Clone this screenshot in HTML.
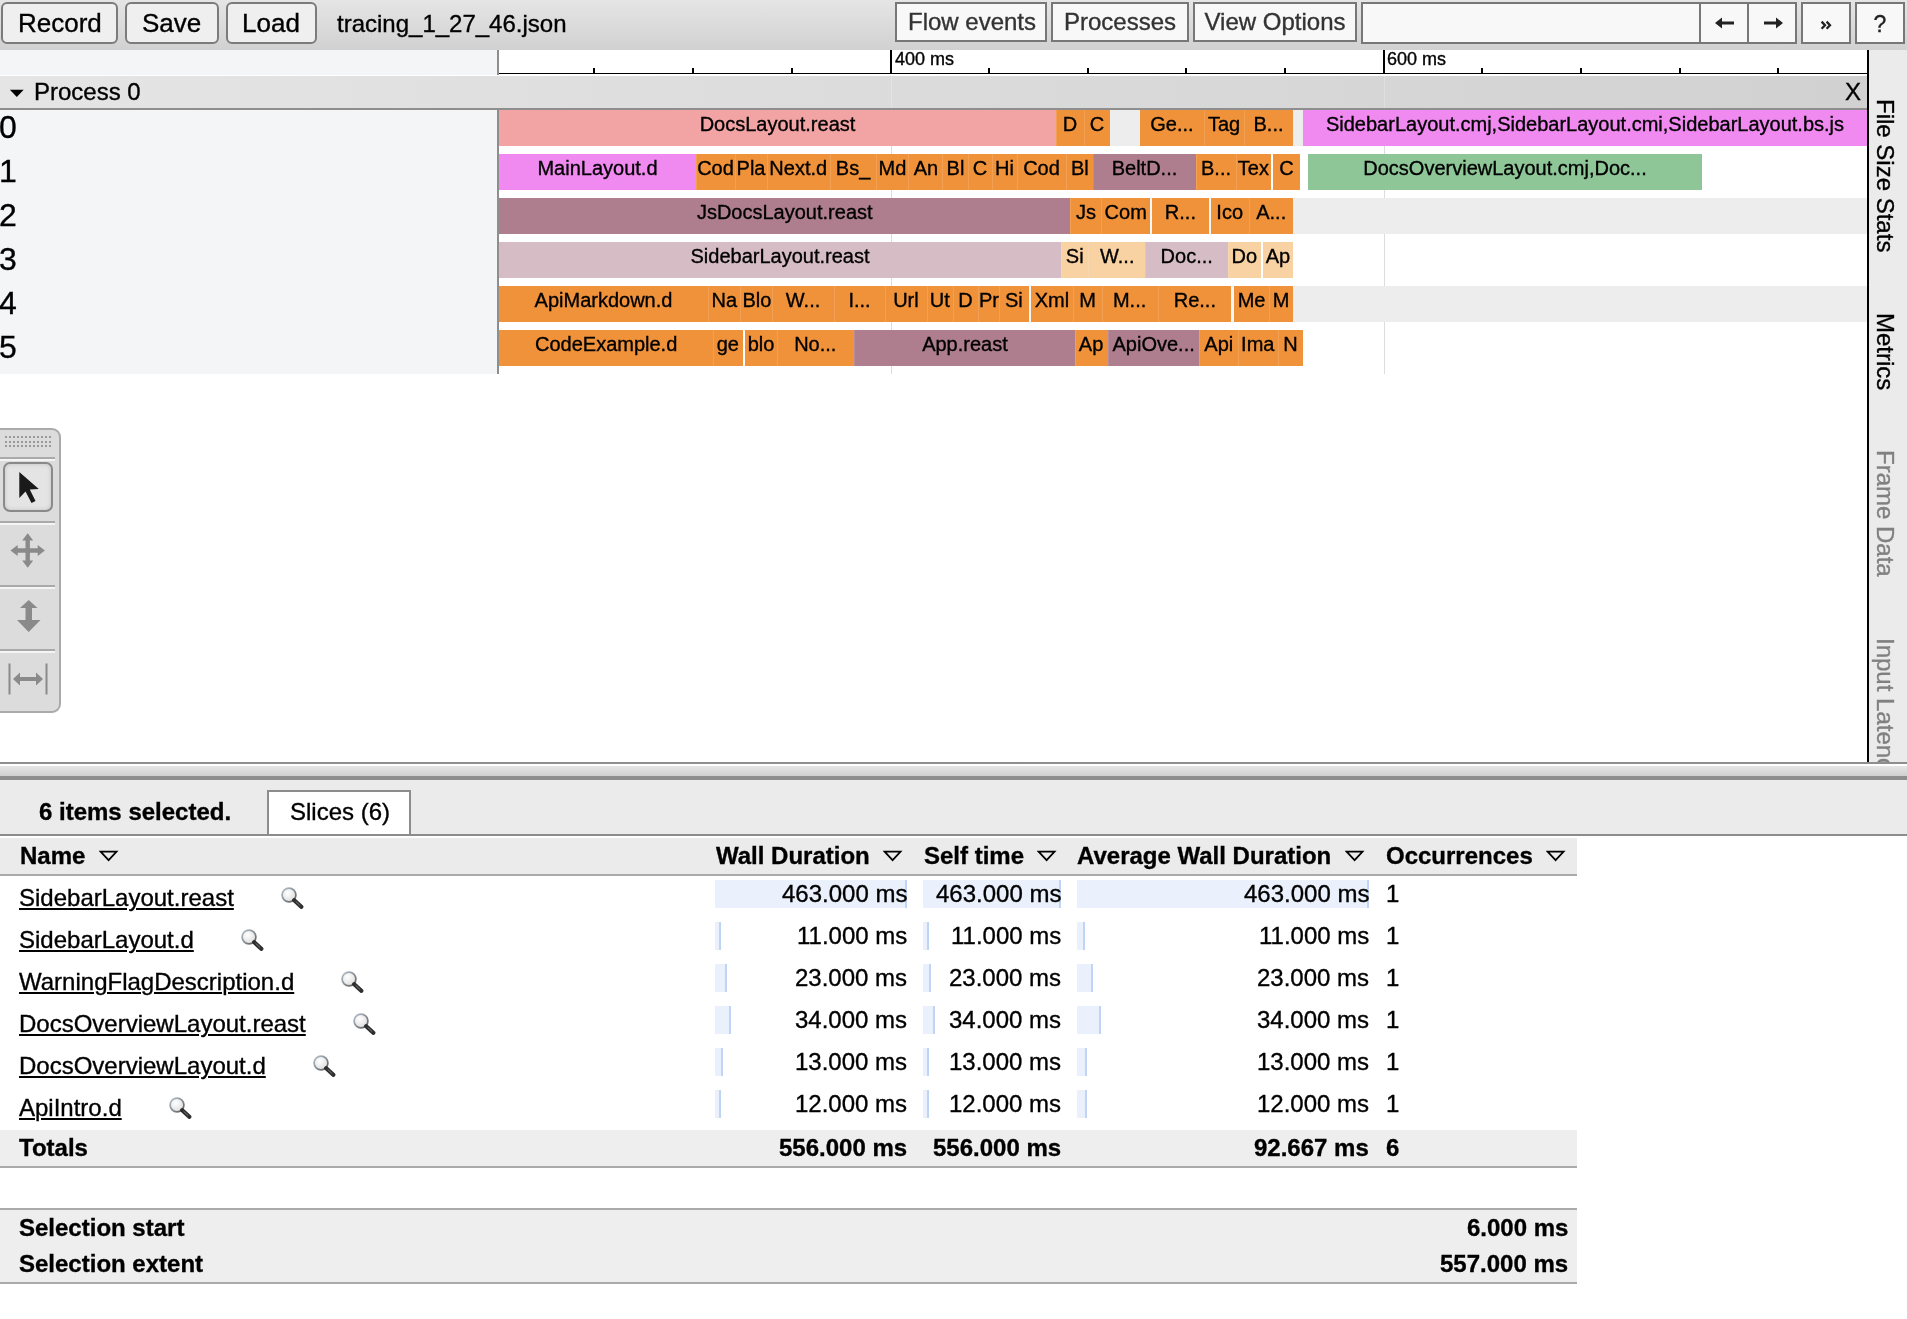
<!DOCTYPE html>
<html><head><meta charset="utf-8"><title>trace</title>
<style>
html,body{margin:0;padding:0;}
body{width:1907px;height:1319px;overflow:hidden;position:relative;background:#fff;font-family:"Liberation Sans", sans-serif;}
.r{position:absolute;}
.t{position:absolute;white-space:nowrap;will-change:transform;-webkit-text-stroke:0.35px currentColor;}
</style></head><body>
<div class="r" style="left:0px;top:0px;width:1907px;height:50px;background:linear-gradient(to bottom,#e5e5e5,#d1d1d1);"></div>
<div class="r" style="left:1px;top:2px;width:117px;height:41.5px;box-sizing:border-box;border:2px solid #7b7b7b;border-radius:6px;background:#efefef;"></div>
<div class="t" style="left:17.9px;top:9.99px;font-size:26px;line-height:26px;color:#000;font-weight:normal;">Record</div>
<div class="r" style="left:125px;top:2px;width:93.5px;height:41.5px;box-sizing:border-box;border:2px solid #7b7b7b;border-radius:6px;background:#efefef;"></div>
<div class="t" style="left:142px;top:9.99px;font-size:26px;line-height:26px;color:#000;font-weight:normal;">Save</div>
<div class="r" style="left:225.5px;top:2px;width:91.0px;height:41.5px;box-sizing:border-box;border:2px solid #7b7b7b;border-radius:6px;background:#efefef;"></div>
<div class="t" style="left:241.5px;top:9.99px;font-size:26px;line-height:26px;color:#000;font-weight:normal;">Load</div>
<div class="t" style="left:337px;top:12.18px;font-size:24px;line-height:24px;color:#000;font-weight:normal;">tracing_1_27_46.json</div>
<div class="r" style="left:895px;top:2px;width:152px;height:39.7px;box-sizing:border-box;border:2px solid #777;background:#f8f8f8;"></div>
<div class="t" style="left:896.0px;width:152px;top:10.28px;font-size:24px;line-height:24px;color:#333;font-weight:normal;text-align:center;">Flow events</div>
<div class="r" style="left:1051px;top:2px;width:138px;height:39.7px;box-sizing:border-box;border:2px solid #777;background:#f8f8f8;"></div>
<div class="t" style="left:1051.0px;width:138px;top:10.28px;font-size:24px;line-height:24px;color:#333;font-weight:normal;text-align:center;">Processes</div>
<div class="r" style="left:1193px;top:2px;width:164px;height:39.7px;box-sizing:border-box;border:2px solid #777;background:#f8f8f8;"></div>
<div class="t" style="left:1193.0px;width:164px;top:10.28px;font-size:24px;line-height:24px;color:#333;font-weight:normal;text-align:center;">View Options</div>
<div class="r" style="left:1361px;top:2px;width:340px;height:41.5px;box-sizing:border-box;border:2px solid #777;background:#f8f8f8;"></div>
<div class="r" style="left:1699px;top:2px;width:50px;height:41.5px;box-sizing:border-box;border:2px solid #777;background:#f8f8f8;"></div>
<div class="r" style="left:1747px;top:2px;width:50px;height:41.5px;box-sizing:border-box;border:2px solid #777;background:#f8f8f8;"></div>
<div class="r" style="left:1801px;top:2px;width:50px;height:41.5px;box-sizing:border-box;border:2px solid #777;background:#f8f8f8;"></div>
<div class="r" style="left:1855px;top:2px;width:50px;height:41.5px;box-sizing:border-box;border:2px solid #777;background:#f8f8f8;"></div>
<svg class="r" style="left:1714px;top:16px" width="22" height="14" viewBox="0 0 22 14"><path d="M1 7 L8 1.5 L8 5.6 L20 5.6 L20 8.4 L8 8.4 L8 12.5 Z" fill="#222"/></svg>
<svg class="r" style="left:1762px;top:16px" width="22" height="14" viewBox="0 0 22 14"><path d="M21 7 L14 1.5 L14 5.6 L2 5.6 L2 8.4 L14 8.4 L14 12.5 Z" fill="#222"/></svg>
<svg class="r" style="left:1816px;top:16px" width="20" height="18" viewBox="1816 16 20 18"><path d="M1821.6 21.6 L1825 25.2 L1821.6 28.8 M1826.6 21.6 L1830 25.2 L1826.6 28.8" fill="none" stroke="#222" stroke-width="2.3" stroke-linejoin="miter" stroke-linecap="butt"/></svg>
<div class="t" style="left:1859.6px;width:40px;top:12.83px;font-size:23px;line-height:23px;color:#222;font-weight:normal;text-align:center;">?</div>
<div class="r" style="left:0px;top:50px;width:497px;height:24.599999999999994px;background:#f3f5f7;"></div>
<div class="r" style="left:497px;top:50px;width:2px;height:24.599999999999994px;background:#8e8e8e;"></div>
<div class="r" style="left:499px;top:50px;width:1368px;height:25px;background:#fff;"></div>
<div class="r" style="left:499px;top:72.5px;width:1368px;height:1.5px;background:#000;"></div>
<div class="r" style="left:593px;top:68px;width:2px;height:5px;background:#000;"></div>
<div class="r" style="left:692px;top:68px;width:2px;height:5px;background:#000;"></div>
<div class="r" style="left:791px;top:68px;width:2px;height:5px;background:#000;"></div>
<div class="r" style="left:988px;top:68px;width:2px;height:5px;background:#000;"></div>
<div class="r" style="left:1087px;top:68px;width:2px;height:5px;background:#000;"></div>
<div class="r" style="left:1185px;top:68px;width:2px;height:5px;background:#000;"></div>
<div class="r" style="left:1284px;top:68px;width:2px;height:5px;background:#000;"></div>
<div class="r" style="left:1481px;top:68px;width:2px;height:5px;background:#000;"></div>
<div class="r" style="left:1580px;top:68px;width:2px;height:5px;background:#000;"></div>
<div class="r" style="left:1679px;top:68px;width:2px;height:5px;background:#000;"></div>
<div class="r" style="left:1777px;top:68px;width:2px;height:5px;background:#000;"></div>
<div class="r" style="left:890px;top:50px;width:2px;height:23px;background:#000;"></div>
<div class="r" style="left:1383px;top:50px;width:2px;height:23px;background:#000;"></div>
<div class="t" style="left:895px;top:49.56px;font-size:18px;line-height:18px;color:#000;font-weight:normal;">400 ms</div>
<div class="t" style="left:1387px;top:49.56px;font-size:18px;line-height:18px;color:#000;font-weight:normal;">600 ms</div>
<div class="r" style="left:0px;top:75px;width:1867px;height:1px;background:#fff;"></div>
<div class="r" style="left:0px;top:76px;width:1867px;height:32px;background:linear-gradient(to right,#e5e5e5,#d1d1d1);"></div>
<div class="r" style="left:0px;top:108px;width:1867px;height:2px;background:#8e8e8e;"></div>
<div class="r" style="left:891px;top:76px;width:1px;height:32px;background:rgba(255,255,255,0.22);"></div>
<div class="r" style="left:1384px;top:76px;width:1px;height:32px;background:rgba(255,255,255,0.22);"></div>
<svg class="r" style="left:9px;top:88px" width="16" height="10" viewBox="0 0 16 10"><path d="M0.9 1.8 L14.7 1.8 L7.8 9 Z" fill="#000"/></svg>
<div class="t" style="left:34px;top:79.68px;font-size:24px;line-height:24px;color:#000;font-weight:normal;">Process 0</div>
<div class="t" style="left:1844.5px;top:79.88px;font-size:24px;line-height:24px;color:#000;font-weight:normal;">X</div>
<div class="r" style="left:0px;top:110px;width:497px;height:264px;background:#f3f5f7;"></div>
<div class="r" style="left:497px;top:110px;width:2px;height:264px;background:#8e8e8e;"></div>
<div class="t" style="left:-1px;top:111.21px;font-size:32px;line-height:32px;color:#000;font-weight:normal;">0</div>
<div class="t" style="left:-1px;top:155.21px;font-size:32px;line-height:32px;color:#000;font-weight:normal;">1</div>
<div class="t" style="left:-1px;top:199.21px;font-size:32px;line-height:32px;color:#000;font-weight:normal;">2</div>
<div class="t" style="left:-1px;top:243.21px;font-size:32px;line-height:32px;color:#000;font-weight:normal;">3</div>
<div class="t" style="left:-1px;top:287.21px;font-size:32px;line-height:32px;color:#000;font-weight:normal;">4</div>
<div class="t" style="left:-1px;top:331.21px;font-size:32px;line-height:32px;color:#000;font-weight:normal;">5</div>
<div class="r" style="left:891px;top:110px;width:1px;height:264px;background:#dcdcdc;"></div>
<div class="r" style="left:1384px;top:110px;width:1px;height:264px;background:#dcdcdc;"></div>
<div class="r" style="left:499px;top:110px;width:1368px;height:36px;background:#ededed;"></div>
<div class="r" style="left:499px;top:198px;width:1368px;height:36px;background:#ededed;"></div>
<div class="r" style="left:499px;top:286px;width:1368px;height:36px;background:#ededed;"></div>
<div class="r" style="left:1150px;top:198px;width:2.2000000000000455px;height:36px;background:#f4f7fa;"></div>
<div class="r" style="left:1209px;top:198px;width:2.2000000000000455px;height:36px;background:#f4f7fa;"></div>
<div class="r" style="left:1029px;top:286px;width:2.2000000000000455px;height:36px;background:#f4f7fa;"></div>
<div class="r" style="left:1231.2px;top:286px;width:2.5px;height:36px;background:#f4f7fa;"></div>
<div class="r" style="left:499px;top:110px;width:557px;height:36px;background:#f2a3a3;"></div>
<div class="t" style="left:489.0px;width:577px;top:113.77px;font-size:20px;line-height:20px;color:#000;font-weight:normal;text-align:center;white-space:nowrap;">DocsLayout.reast</div>
<div class="r" style="left:1056px;top:110px;width:28px;height:36px;background:#f0923a;box-shadow:inset 1px 0 0 rgba(255,255,255,0.13);"></div>
<div class="t" style="left:1046.0px;width:48px;top:113.77px;font-size:20px;line-height:20px;color:#000;font-weight:normal;text-align:center;white-space:nowrap;">D</div>
<div class="r" style="left:1084px;top:110px;width:26px;height:36px;background:#f0923a;box-shadow:inset 1px 0 0 rgba(255,255,255,0.13);"></div>
<div class="t" style="left:1074.0px;width:46px;top:113.77px;font-size:20px;line-height:20px;color:#000;font-weight:normal;text-align:center;white-space:nowrap;">C</div>
<div class="r" style="left:1140px;top:110px;width:64px;height:36px;background:#f0923a;"></div>
<div class="t" style="left:1130.0px;width:84px;top:113.77px;font-size:20px;line-height:20px;color:#000;font-weight:normal;text-align:center;white-space:nowrap;">Ge...</div>
<div class="r" style="left:1204px;top:110px;width:40px;height:36px;background:#f0923a;box-shadow:inset 1px 0 0 rgba(255,255,255,0.13);"></div>
<div class="t" style="left:1194.0px;width:60px;top:113.77px;font-size:20px;line-height:20px;color:#000;font-weight:normal;text-align:center;white-space:nowrap;">Tag</div>
<div class="r" style="left:1244px;top:110px;width:49px;height:36px;background:#f0923a;box-shadow:inset 1px 0 0 rgba(255,255,255,0.13);"></div>
<div class="t" style="left:1234.0px;width:69px;top:113.77px;font-size:20px;line-height:20px;color:#000;font-weight:normal;text-align:center;white-space:nowrap;">B...</div>
<div class="r" style="left:1303px;top:110px;width:564px;height:36px;background:#f08af0;"></div>
<div class="t" style="left:1293.0px;width:584px;top:113.77px;font-size:20px;line-height:20px;color:#000;font-weight:normal;text-align:center;white-space:nowrap;">SidebarLayout.cmj,SidebarLayout.cmi,SidebarLayout.bs.js</div>
<div class="r" style="left:499px;top:154px;width:197px;height:36px;background:#f08af0;"></div>
<div class="t" style="left:489.0px;width:217px;top:157.77px;font-size:20px;line-height:20px;color:#000;font-weight:normal;text-align:center;white-space:nowrap;">MainLayout.d</div>
<div class="r" style="left:696px;top:154px;width:39px;height:36px;background:#f0923a;box-shadow:inset 1px 0 0 rgba(255,255,255,0.13);"></div>
<div class="t" style="left:686.0px;width:59px;top:157.77px;font-size:20px;line-height:20px;color:#000;font-weight:normal;text-align:center;white-space:nowrap;">Cod</div>
<div class="r" style="left:735px;top:154px;width:32px;height:36px;background:#f0923a;box-shadow:inset 1px 0 0 rgba(255,255,255,0.13);"></div>
<div class="t" style="left:725.0px;width:52px;top:157.77px;font-size:20px;line-height:20px;color:#000;font-weight:normal;text-align:center;white-space:nowrap;">Pla</div>
<div class="r" style="left:767px;top:154px;width:63px;height:36px;background:#f0923a;box-shadow:inset 1px 0 0 rgba(255,255,255,0.13);"></div>
<div class="t" style="left:757.0px;width:82.5px;top:157.77px;font-size:20px;line-height:20px;color:#000;font-weight:normal;text-align:center;white-space:nowrap;">Next.d</div>
<div class="r" style="left:830px;top:154px;width:46px;height:36px;background:#f0923a;box-shadow:inset 1px 0 0 rgba(255,255,255,0.13);"></div>
<div class="t" style="left:819.5px;width:66.10000000000002px;top:157.77px;font-size:20px;line-height:20px;color:#000;font-weight:normal;text-align:center;white-space:nowrap;">Bs_</div>
<div class="r" style="left:876px;top:154px;width:32px;height:36px;background:#f0923a;box-shadow:inset 1px 0 0 rgba(255,255,255,0.13);"></div>
<div class="t" style="left:865.5999999999999px;width:52.89999999999998px;top:157.77px;font-size:20px;line-height:20px;color:#000;font-weight:normal;text-align:center;white-space:nowrap;">Md</div>
<div class="r" style="left:908px;top:154px;width:34px;height:36px;background:#f0923a;box-shadow:inset 1px 0 0 rgba(255,255,255,0.13);"></div>
<div class="t" style="left:898.5px;width:54.0px;top:157.77px;font-size:20px;line-height:20px;color:#000;font-weight:normal;text-align:center;white-space:nowrap;">An</div>
<div class="r" style="left:942px;top:154px;width:26px;height:36px;background:#f0923a;box-shadow:inset 1px 0 0 rgba(255,255,255,0.13);"></div>
<div class="t" style="left:932.5px;width:45.0px;top:157.77px;font-size:20px;line-height:20px;color:#000;font-weight:normal;text-align:center;white-space:nowrap;">Bl</div>
<div class="r" style="left:968px;top:154px;width:24px;height:36px;background:#f0923a;box-shadow:inset 1px 0 0 rgba(255,255,255,0.13);"></div>
<div class="t" style="left:957.5px;width:44.0px;top:157.77px;font-size:20px;line-height:20px;color:#000;font-weight:normal;text-align:center;white-space:nowrap;">C</div>
<div class="r" style="left:992px;top:154px;width:25px;height:36px;background:#f0923a;box-shadow:inset 1px 0 0 rgba(255,255,255,0.13);"></div>
<div class="t" style="left:981.5px;width:45.10000000000002px;top:157.77px;font-size:20px;line-height:20px;color:#000;font-weight:normal;text-align:center;white-space:nowrap;">Hi</div>
<div class="r" style="left:1017px;top:154px;width:49px;height:36px;background:#f0923a;box-shadow:inset 1px 0 0 rgba(255,255,255,0.13);"></div>
<div class="t" style="left:1006.5999999999999px;width:68.99999999999989px;top:157.77px;font-size:20px;line-height:20px;color:#000;font-weight:normal;text-align:center;white-space:nowrap;">Cod</div>
<div class="r" style="left:1066px;top:154px;width:27px;height:36px;background:#f0923a;box-shadow:inset 1px 0 0 rgba(255,255,255,0.13);"></div>
<div class="t" style="left:1055.6px;width:47.600000000000136px;top:157.77px;font-size:20px;line-height:20px;color:#000;font-weight:normal;text-align:center;white-space:nowrap;">Bl</div>
<div class="r" style="left:1093px;top:154px;width:103px;height:36px;background:#ae7e8e;box-shadow:inset 1px 0 0 rgba(255,255,255,0.13);"></div>
<div class="t" style="left:1083.2px;width:123.0px;top:157.77px;font-size:20px;line-height:20px;color:#000;font-weight:normal;text-align:center;white-space:nowrap;">BeltD...</div>
<div class="r" style="left:1196px;top:154px;width:40px;height:36px;background:#f0923a;box-shadow:inset 1px 0 0 rgba(255,255,255,0.13);"></div>
<div class="t" style="left:1186.2px;width:60.09999999999991px;top:157.77px;font-size:20px;line-height:20px;color:#000;font-weight:normal;text-align:center;white-space:nowrap;">B...</div>
<div class="r" style="left:1236px;top:154px;width:35px;height:36px;background:#f0923a;box-shadow:inset 1px 0 0 rgba(255,255,255,0.13);"></div>
<div class="t" style="left:1226.3000000000002px;width:54.700000000000045px;top:157.77px;font-size:20px;line-height:20px;color:#000;font-weight:normal;text-align:center;white-space:nowrap;">Tex</div>
<div class="r" style="left:1273px;top:154px;width:27px;height:36px;background:#f0923a;"></div>
<div class="t" style="left:1263.0px;width:47px;top:157.77px;font-size:20px;line-height:20px;color:#000;font-weight:normal;text-align:center;white-space:nowrap;">C</div>
<div class="r" style="left:1308px;top:154px;width:394px;height:36px;background:#8ec698;"></div>
<div class="t" style="left:1298.0px;width:414px;top:157.77px;font-size:20px;line-height:20px;color:#000;font-weight:normal;text-align:center;white-space:nowrap;">DocsOverviewLayout.cmj,Doc...</div>
<div class="r" style="left:499px;top:198px;width:571px;height:36px;background:#ae7e8e;"></div>
<div class="t" style="left:489.0px;width:591.5px;top:201.77px;font-size:20px;line-height:20px;color:#000;font-weight:normal;text-align:center;white-space:nowrap;">JsDocsLayout.reast</div>
<div class="r" style="left:1070px;top:198px;width:31px;height:36px;background:#f0923a;box-shadow:inset 1px 0 0 rgba(255,255,255,0.13);"></div>
<div class="t" style="left:1060.5px;width:50.09999999999991px;top:201.77px;font-size:20px;line-height:20px;color:#000;font-weight:normal;text-align:center;white-space:nowrap;">Js</div>
<div class="r" style="left:1101px;top:198px;width:49px;height:36px;background:#f0923a;box-shadow:inset 1px 0 0 rgba(255,255,255,0.13);"></div>
<div class="t" style="left:1090.6px;width:69.40000000000009px;top:201.77px;font-size:20px;line-height:20px;color:#000;font-weight:normal;text-align:center;white-space:nowrap;">Com</div>
<div class="r" style="left:1152px;top:198px;width:57px;height:36px;background:#f0923a;"></div>
<div class="t" style="left:1142.1999999999998px;width:76.79999999999995px;top:201.77px;font-size:20px;line-height:20px;color:#000;font-weight:normal;text-align:center;white-space:nowrap;">R...</div>
<div class="r" style="left:1211px;top:198px;width:38px;height:36px;background:#f0923a;"></div>
<div class="t" style="left:1201.2000000000003px;width:57.399999999999864px;top:201.77px;font-size:20px;line-height:20px;color:#000;font-weight:normal;text-align:center;white-space:nowrap;">Ico</div>
<div class="r" style="left:1249px;top:198px;width:44px;height:36px;background:#f0923a;box-shadow:inset 1px 0 0 rgba(255,255,255,0.13);"></div>
<div class="t" style="left:1238.6px;width:64.40000000000009px;top:201.77px;font-size:20px;line-height:20px;color:#000;font-weight:normal;text-align:center;white-space:nowrap;">A...</div>
<div class="r" style="left:499px;top:242px;width:562px;height:36px;background:#d6bcc5;"></div>
<div class="t" style="left:489.0px;width:582px;top:245.77px;font-size:20px;line-height:20px;color:#000;font-weight:normal;text-align:center;white-space:nowrap;">SidebarLayout.reast</div>
<div class="r" style="left:1061px;top:242px;width:27px;height:36px;background:#f8d2a2;box-shadow:inset 1px 0 0 rgba(255,255,255,0.13);"></div>
<div class="t" style="left:1051.0px;width:47.5px;top:245.77px;font-size:20px;line-height:20px;color:#000;font-weight:normal;text-align:center;white-space:nowrap;">Si</div>
<div class="r" style="left:1088px;top:242px;width:57px;height:36px;background:#f8d2a2;box-shadow:inset 1px 0 0 rgba(255,255,255,0.13);"></div>
<div class="t" style="left:1078.5px;width:76.5px;top:245.77px;font-size:20px;line-height:20px;color:#000;font-weight:normal;text-align:center;white-space:nowrap;">W...</div>
<div class="r" style="left:1145px;top:242px;width:83px;height:36px;background:#d6bcc5;box-shadow:inset 1px 0 0 rgba(255,255,255,0.13);"></div>
<div class="t" style="left:1135.0px;width:103.40000000000009px;top:245.77px;font-size:20px;line-height:20px;color:#000;font-weight:normal;text-align:center;white-space:nowrap;">Doc...</div>
<div class="r" style="left:1228px;top:242px;width:33px;height:36px;background:#f8d2a2;box-shadow:inset 1px 0 0 rgba(255,255,255,0.13);"></div>
<div class="t" style="left:1218.4px;width:52.59999999999991px;top:245.77px;font-size:20px;line-height:20px;color:#000;font-weight:normal;text-align:center;white-space:nowrap;">Do</div>
<div class="r" style="left:1263px;top:242px;width:30px;height:36px;background:#f8d2a2;"></div>
<div class="t" style="left:1253.0px;width:50px;top:245.77px;font-size:20px;line-height:20px;color:#000;font-weight:normal;text-align:center;white-space:nowrap;">Ap</div>
<div class="r" style="left:499px;top:286px;width:209px;height:36px;background:#f0923a;"></div>
<div class="t" style="left:489.0px;width:229px;top:289.77px;font-size:20px;line-height:20px;color:#000;font-weight:normal;text-align:center;white-space:nowrap;">ApiMarkdown.d</div>
<div class="r" style="left:708px;top:286px;width:32px;height:36px;background:#f0923a;box-shadow:inset 1px 0 0 rgba(255,255,255,0.13);"></div>
<div class="t" style="left:698.0px;width:52.5px;top:289.77px;font-size:20px;line-height:20px;color:#000;font-weight:normal;text-align:center;white-space:nowrap;">Na</div>
<div class="r" style="left:740px;top:286px;width:32px;height:36px;background:#f0923a;box-shadow:inset 1px 0 0 rgba(255,255,255,0.13);"></div>
<div class="t" style="left:730.5px;width:51.799999999999955px;top:289.77px;font-size:20px;line-height:20px;color:#000;font-weight:normal;text-align:center;white-space:nowrap;">Blo</div>
<div class="r" style="left:772px;top:286px;width:62px;height:36px;background:#f0923a;box-shadow:inset 1px 0 0 rgba(255,255,255,0.13);"></div>
<div class="t" style="left:762.3px;width:82.10000000000002px;top:289.77px;font-size:20px;line-height:20px;color:#000;font-weight:normal;text-align:center;white-space:nowrap;">W...</div>
<div class="r" style="left:834px;top:286px;width:51px;height:36px;background:#f0923a;box-shadow:inset 1px 0 0 rgba(255,255,255,0.13);"></div>
<div class="t" style="left:824.4px;width:71.0px;top:289.77px;font-size:20px;line-height:20px;color:#000;font-weight:normal;text-align:center;white-space:nowrap;">I...</div>
<div class="r" style="left:885px;top:286px;width:42px;height:36px;background:#f0923a;box-shadow:inset 1px 0 0 rgba(255,255,255,0.13);"></div>
<div class="t" style="left:875.3999999999999px;width:61.80000000000007px;top:289.77px;font-size:20px;line-height:20px;color:#000;font-weight:normal;text-align:center;white-space:nowrap;">Url</div>
<div class="r" style="left:927px;top:286px;width:26px;height:36px;background:#f0923a;box-shadow:inset 1px 0 0 rgba(255,255,255,0.13);"></div>
<div class="t" style="left:917.2px;width:45.5px;top:289.77px;font-size:20px;line-height:20px;color:#000;font-weight:normal;text-align:center;white-space:nowrap;">Ut</div>
<div class="r" style="left:953px;top:286px;width:25px;height:36px;background:#f0923a;box-shadow:inset 1px 0 0 rgba(255,255,255,0.13);"></div>
<div class="t" style="left:942.7px;width:44.799999999999955px;top:289.77px;font-size:20px;line-height:20px;color:#000;font-weight:normal;text-align:center;white-space:nowrap;">D</div>
<div class="r" style="left:978px;top:286px;width:21px;height:36px;background:#f0923a;box-shadow:inset 1px 0 0 rgba(255,255,255,0.13);"></div>
<div class="t" style="left:967.5px;width:41.89999999999998px;top:289.77px;font-size:20px;line-height:20px;color:#000;font-weight:normal;text-align:center;white-space:nowrap;">Pr</div>
<div class="r" style="left:999px;top:286px;width:30px;height:36px;background:#f0923a;box-shadow:inset 1px 0 0 rgba(255,255,255,0.13);"></div>
<div class="t" style="left:989.4000000000001px;width:49.60000000000002px;top:289.77px;font-size:20px;line-height:20px;color:#000;font-weight:normal;text-align:center;white-space:nowrap;">Si</div>
<div class="r" style="left:1031px;top:286px;width:42px;height:36px;background:#f0923a;"></div>
<div class="t" style="left:1021.2px;width:62.0px;top:289.77px;font-size:20px;line-height:20px;color:#000;font-weight:normal;text-align:center;white-space:nowrap;">Xml</div>
<div class="r" style="left:1073px;top:286px;width:29px;height:36px;background:#f0923a;box-shadow:inset 1px 0 0 rgba(255,255,255,0.13);"></div>
<div class="t" style="left:1063.2px;width:49.09999999999991px;top:289.77px;font-size:20px;line-height:20px;color:#000;font-weight:normal;text-align:center;white-space:nowrap;">M</div>
<div class="r" style="left:1102px;top:286px;width:56px;height:36px;background:#f0923a;box-shadow:inset 1px 0 0 rgba(255,255,255,0.13);"></div>
<div class="t" style="left:1092.3000000000002px;width:75.20000000000005px;top:289.77px;font-size:20px;line-height:20px;color:#000;font-weight:normal;text-align:center;white-space:nowrap;">M...</div>
<div class="r" style="left:1158px;top:286px;width:73px;height:36px;background:#f0923a;box-shadow:inset 1px 0 0 rgba(255,255,255,0.13);"></div>
<div class="t" style="left:1147.5px;width:93.70000000000005px;top:289.77px;font-size:20px;line-height:20px;color:#000;font-weight:normal;text-align:center;white-space:nowrap;">Re...</div>
<div class="r" style="left:1234px;top:286px;width:35px;height:36px;background:#f0923a;"></div>
<div class="t" style="left:1223.7px;width:55.09999999999991px;top:289.77px;font-size:20px;line-height:20px;color:#000;font-weight:normal;text-align:center;white-space:nowrap;">Me</div>
<div class="r" style="left:1269px;top:286px;width:24px;height:36px;background:#f0923a;box-shadow:inset 1px 0 0 rgba(255,255,255,0.13);"></div>
<div class="t" style="left:1258.8000000000002px;width:44.200000000000045px;top:289.77px;font-size:20px;line-height:20px;color:#000;font-weight:normal;text-align:center;white-space:nowrap;">M</div>
<div class="r" style="left:499px;top:330px;width:214px;height:36px;background:#f0923a;"></div>
<div class="t" style="left:489.0px;width:234.29999999999995px;top:333.77px;font-size:20px;line-height:20px;color:#000;font-weight:normal;text-align:center;white-space:nowrap;">CodeExample.d</div>
<div class="r" style="left:713px;top:330px;width:30px;height:36px;background:#f0923a;box-shadow:inset 1px 0 0 rgba(255,255,255,0.13);"></div>
<div class="t" style="left:703.3px;width:49.700000000000045px;top:333.77px;font-size:20px;line-height:20px;color:#000;font-weight:normal;text-align:center;white-space:nowrap;">ge</div>
<div class="r" style="left:745px;top:330px;width:32px;height:36px;background:#f0923a;"></div>
<div class="t" style="left:735.0px;width:52px;top:333.77px;font-size:20px;line-height:20px;color:#000;font-weight:normal;text-align:center;white-space:nowrap;">blo</div>
<div class="r" style="left:777px;top:330px;width:77px;height:36px;background:#f0923a;box-shadow:inset 1px 0 0 rgba(255,255,255,0.13);"></div>
<div class="t" style="left:767.0px;width:96.5px;top:333.77px;font-size:20px;line-height:20px;color:#000;font-weight:normal;text-align:center;white-space:nowrap;">No...</div>
<div class="r" style="left:854px;top:330px;width:221px;height:36px;background:#ae7e8e;box-shadow:inset 1px 0 0 rgba(255,255,255,0.13);"></div>
<div class="t" style="left:843.5px;width:241.9000000000001px;top:333.77px;font-size:20px;line-height:20px;color:#000;font-weight:normal;text-align:center;white-space:nowrap;">App.reast</div>
<div class="r" style="left:1075px;top:330px;width:33px;height:36px;background:#f0923a;box-shadow:inset 1px 0 0 rgba(255,255,255,0.13);"></div>
<div class="t" style="left:1065.4px;width:52.19999999999982px;top:333.77px;font-size:20px;line-height:20px;color:#000;font-weight:normal;text-align:center;white-space:nowrap;">Ap</div>
<div class="r" style="left:1108px;top:330px;width:91px;height:36px;background:#ae7e8e;box-shadow:inset 1px 0 0 rgba(255,255,255,0.13);"></div>
<div class="t" style="left:1097.6px;width:111.30000000000018px;top:333.77px;font-size:20px;line-height:20px;color:#000;font-weight:normal;text-align:center;white-space:nowrap;">ApiOve...</div>
<div class="r" style="left:1199px;top:330px;width:39px;height:36px;background:#f0923a;box-shadow:inset 1px 0 0 rgba(255,255,255,0.13);"></div>
<div class="t" style="left:1188.9px;width:59.5px;top:333.77px;font-size:20px;line-height:20px;color:#000;font-weight:normal;text-align:center;white-space:nowrap;">Api</div>
<div class="r" style="left:1238px;top:330px;width:40px;height:36px;background:#f0923a;box-shadow:inset 1px 0 0 rgba(255,255,255,0.13);"></div>
<div class="t" style="left:1228.4px;width:59.5px;top:333.77px;font-size:20px;line-height:20px;color:#000;font-weight:normal;text-align:center;white-space:nowrap;">Ima</div>
<div class="r" style="left:1278px;top:330px;width:25px;height:36px;background:#f0923a;box-shadow:inset 1px 0 0 rgba(255,255,255,0.13);"></div>
<div class="t" style="left:1267.9px;width:45.09999999999991px;top:333.77px;font-size:20px;line-height:20px;color:#000;font-weight:normal;text-align:center;white-space:nowrap;">N</div>
<div class="r" style="left:1867px;top:50px;width:2px;height:712px;background:#000;"></div>
<div class="r" style="left:1869px;top:50px;width:38px;height:712px;background:#ebebeb;"></div>
<div class="t" style="left:1872px;top:99px;width:26px;font-size:24px;line-height:26px;color:#000;writing-mode:vertical-rl;white-space:nowrap;">File Size Stats</div>
<div class="t" style="left:1872px;top:313px;width:26px;font-size:24px;line-height:26px;color:#000;writing-mode:vertical-rl;white-space:nowrap;">Metrics</div>
<div class="t" style="left:1872px;top:450px;width:26px;font-size:24px;line-height:26px;color:#808080;writing-mode:vertical-rl;white-space:nowrap;">Frame Data</div>
<div class="t" style="left:1872px;top:638px;width:26px;font-size:24px;line-height:26px;color:#808080;writing-mode:vertical-rl;white-space:nowrap;">Input Latency</div>
<div class="r" style="left:0px;top:428px;width:61px;height:285px;box-sizing:border-box;border:2px solid #aaa;border-left:none;border-radius:0 9px 9px 0;background:#dcdcdc;"></div>
<div class="r" style="left:5px;top:436px;width:47px;height:2px;background:repeating-linear-gradient(to right,#999 0 2.5px,transparent 2.5px 4px);"></div>
<div class="r" style="left:5px;top:440.5px;width:47px;height:2.0px;background:repeating-linear-gradient(to right,#999 0 2.5px,transparent 2.5px 4px);"></div>
<div class="r" style="left:5px;top:445px;width:47px;height:2px;background:repeating-linear-gradient(to right,#999 0 2.5px,transparent 2.5px 4px);"></div>
<div class="r" style="left:0px;top:456.5px;width:55px;height:2.0px;background:#aaa;"></div>
<div class="r" style="left:0px;top:458.5px;width:55px;height:2.0px;background:#f4f4f4;"></div>
<div class="r" style="left:0px;top:520.5px;width:55px;height:2.0px;background:#aaa;"></div>
<div class="r" style="left:0px;top:522.5px;width:55px;height:2.0px;background:#f4f4f4;"></div>
<div class="r" style="left:0px;top:584.5px;width:55px;height:2.0px;background:#aaa;"></div>
<div class="r" style="left:0px;top:586.5px;width:55px;height:2.0px;background:#f4f4f4;"></div>
<div class="r" style="left:0px;top:648.5px;width:55px;height:2.0px;background:#aaa;"></div>
<div class="r" style="left:0px;top:650.5px;width:55px;height:2.0px;background:#f4f4f4;"></div>
<div class="r" style="left:3px;top:462px;width:50px;height:50px;box-sizing:border-box;border:2px solid #8a8a8a;border-radius:7px;background:#e4e4e4;box-shadow:inset 0 0 4px rgba(0,0,0,0.15);"></div>
<svg class="r" style="left:0;top:428px" width="60" height="285" viewBox="0 428 60 285"><path d="M19.3 472 L19.3 498 L25.5 491.5 L31.5 503 L35.5 501 L29.8 489.5 L38.8 489 Z" fill="#1a1a1a"/><path d="M27.7 533.3 L33.2 540.5 L29.9 540.5 L29.9 548.3 L37.7 548.3 L37.7 545.0 L44.9 550.5 L37.7 556.0 L37.7 552.7 L29.9 552.7 L29.9 560.5 L33.2 560.5 L27.7 567.7 L22.2 560.5 L25.5 560.5 L25.5 552.7 L17.7 552.7 L17.7 556.0 L10.5 550.5 L17.7 545.0 L17.7 548.3 L25.5 548.3 L25.5 540.5 L22.2 540.5 Z" fill="#8a8a8a"/><path d="M28.7 600 L20 608 L25.5 608 L25.5 620 L17 620 L28.7 632 L40.5 620 L32 620 L32 608 L37.5 608 Z" fill="#8a8a8a"/><rect x="8.5" y="663.5" width="2" height="31" fill="#8a8a8a"/><rect x="45.5" y="663.5" width="2" height="31" fill="#8a8a8a"/><path d="M13 679 L20 672.5 L20 677 L36 677 L36 672.5 L43 679 L36 685.5 L36 681 L20 681 L20 685.5 Z" fill="#8a8a8a"/></svg>
<div class="r" style="left:0px;top:762px;width:1907px;height:2px;background:#8e8e8e;"></div>
<div class="r" style="left:0px;top:764px;width:1907px;height:2px;background:#fff;"></div>
<div class="r" style="left:0px;top:766px;width:1907px;height:10px;background:linear-gradient(to bottom,#e6e6e6,#d0d0d0);"></div>
<div class="r" style="left:0px;top:776px;width:1907px;height:4px;background:#8e8e8e;"></div>
<div class="r" style="left:0px;top:780px;width:1907px;height:54px;background:#ebebeb;"></div>
<div class="r" style="left:0px;top:834px;width:1907px;height:2px;background:#8c8c8c;"></div>
<div class="t" style="left:39px;top:799.68px;font-size:24px;line-height:24px;color:#000;font-weight:bold;">6 items selected.</div>
<div class="r" style="left:267px;top:790px;width:144px;height:44px;box-sizing:border-box;border:2px solid #8c8c8c;border-bottom:none;background:#fff;"></div>
<div class="t" style="left:269.5px;width:140px;top:799.68px;font-size:24px;line-height:24px;color:#000;font-weight:normal;text-align:center;">Slices (6)</div>
<div class="r" style="left:0px;top:838px;width:1577px;height:36px;background:#ebebeb;"></div>
<div class="r" style="left:0px;top:874px;width:1577px;height:2px;background:#aaa;"></div>
<div class="t" style="left:20px;top:843.68px;font-size:24px;line-height:24px;color:#000;font-weight:bold;">Name</div>
<svg class="r" style="left:98.5px;top:850px" width="20" height="12" viewBox="0 0 20 12"><path d="M1.6 1.6 L17.6 1.6 L9.6 10.2 Z" fill="none" stroke="#000" stroke-width="1.7" stroke-linejoin="miter"/></svg>
<div class="t" style="left:715.5px;top:843.68px;font-size:24px;line-height:24px;color:#000;font-weight:bold;">Wall Duration</div>
<svg class="r" style="left:882.5px;top:850px" width="20" height="12" viewBox="0 0 20 12"><path d="M1.6 1.6 L17.6 1.6 L9.6 10.2 Z" fill="none" stroke="#000" stroke-width="1.7" stroke-linejoin="miter"/></svg>
<div class="t" style="left:923.5px;top:843.68px;font-size:24px;line-height:24px;color:#000;font-weight:bold;">Self time</div>
<svg class="r" style="left:1036.5px;top:850px" width="20" height="12" viewBox="0 0 20 12"><path d="M1.6 1.6 L17.6 1.6 L9.6 10.2 Z" fill="none" stroke="#000" stroke-width="1.7" stroke-linejoin="miter"/></svg>
<div class="t" style="left:1077px;top:843.68px;font-size:24px;line-height:24px;color:#000;font-weight:bold;">Average Wall Duration</div>
<svg class="r" style="left:1344.5px;top:850px" width="20" height="12" viewBox="0 0 20 12"><path d="M1.6 1.6 L17.6 1.6 L9.6 10.2 Z" fill="none" stroke="#000" stroke-width="1.7" stroke-linejoin="miter"/></svg>
<div class="t" style="left:1385.5px;top:843.68px;font-size:24px;line-height:24px;color:#000;font-weight:bold;">Occurrences</div>
<svg class="r" style="left:1545.5px;top:850px" width="20" height="12" viewBox="0 0 20 12"><path d="M1.6 1.6 L17.6 1.6 L9.6 10.2 Z" fill="none" stroke="#000" stroke-width="1.7" stroke-linejoin="miter"/></svg>
<div class="t" style="left:19px;top:885.68px;font-size:24px;line-height:24px;text-decoration:underline;text-underline-offset:2px;text-decoration-thickness:2px;" id="nm0">SidebarLayout.reast</div>
<svg class="r" style="left:280.6px;top:887.4px" width="23" height="22" viewBox="0 0 23 22"><defs><radialGradient id="lg0" cx="0.4" cy="0.35" r="0.7"><stop offset="0" stop-color="#ffffff"/><stop offset="1" stop-color="#dcdcdc"/></radialGradient><linearGradient id="rg0" x1="0" y1="0" x2="1" y2="1"><stop offset="0" stop-color="#b8c4d0"/><stop offset="1" stop-color="#5a5a5a"/></linearGradient></defs><circle cx="8" cy="8" r="6.9" fill="url(#lg0)" stroke="url(#rg0)" stroke-width="1.7"/><path d="M13.2 13.2 L20.3 19.8" stroke="#2e2e2e" stroke-width="4.2" stroke-linecap="round"/><path d="M14.6 14.3 L19.2 18.6" stroke="#7a7a7a" stroke-width="1"/></svg>
<div class="r" style="left:715px;top:880px;width:192px;height:28px;box-sizing:border-box;background:#ebf1fc;border-right:2px solid #c0d4f6;"></div>
<div class="r" style="left:923px;top:880px;width:138px;height:28px;box-sizing:border-box;background:#ebf1fc;border-right:2px solid #c0d4f6;"></div>
<div class="r" style="left:1077px;top:880px;width:292px;height:28px;box-sizing:border-box;background:#ebf1fc;border-right:2px solid #c0d4f6;"></div>
<div class="t" style="right:1000px;top:881.68px;font-size:24px;line-height:24px;color:#000;font-weight:normal;text-align:right;">463.000 ms</div>
<div class="t" style="right:846px;top:881.68px;font-size:24px;line-height:24px;color:#000;font-weight:normal;text-align:right;">463.000 ms</div>
<div class="t" style="right:538px;top:881.68px;font-size:24px;line-height:24px;color:#000;font-weight:normal;text-align:right;">463.000 ms</div>
<div class="t" style="left:1386px;top:881.68px;font-size:24px;line-height:24px;color:#000;font-weight:normal;">1</div>
<div class="t" style="left:19px;top:927.68px;font-size:24px;line-height:24px;text-decoration:underline;text-underline-offset:2px;text-decoration-thickness:2px;" id="nm1">SidebarLayout.d</div>
<svg class="r" style="left:241.2px;top:929.4px" width="23" height="22" viewBox="0 0 23 22"><defs><radialGradient id="lg1" cx="0.4" cy="0.35" r="0.7"><stop offset="0" stop-color="#ffffff"/><stop offset="1" stop-color="#dcdcdc"/></radialGradient><linearGradient id="rg1" x1="0" y1="0" x2="1" y2="1"><stop offset="0" stop-color="#b8c4d0"/><stop offset="1" stop-color="#5a5a5a"/></linearGradient></defs><circle cx="8" cy="8" r="6.9" fill="url(#lg1)" stroke="url(#rg1)" stroke-width="1.7"/><path d="M13.2 13.2 L20.3 19.8" stroke="#2e2e2e" stroke-width="4.2" stroke-linecap="round"/><path d="M14.6 14.3 L19.2 18.6" stroke="#7a7a7a" stroke-width="1"/></svg>
<div class="r" style="left:715px;top:922px;width:6px;height:28px;box-sizing:border-box;background:#ebf1fc;border-right:2px solid #c0d4f6;"></div>
<div class="r" style="left:923px;top:922px;width:6px;height:28px;box-sizing:border-box;background:#ebf1fc;border-right:2px solid #c0d4f6;"></div>
<div class="r" style="left:1077px;top:922px;width:8px;height:28px;box-sizing:border-box;background:#ebf1fc;border-right:2px solid #c0d4f6;"></div>
<div class="t" style="right:1000px;top:923.68px;font-size:24px;line-height:24px;color:#000;font-weight:normal;text-align:right;">11.000 ms</div>
<div class="t" style="right:846px;top:923.68px;font-size:24px;line-height:24px;color:#000;font-weight:normal;text-align:right;">11.000 ms</div>
<div class="t" style="right:538px;top:923.68px;font-size:24px;line-height:24px;color:#000;font-weight:normal;text-align:right;">11.000 ms</div>
<div class="t" style="left:1386px;top:923.68px;font-size:24px;line-height:24px;color:#000;font-weight:normal;">1</div>
<div class="t" style="left:19px;top:969.68px;font-size:24px;line-height:24px;text-decoration:underline;text-underline-offset:2px;text-decoration-thickness:2px;" id="nm2">WarningFlagDescription.d</div>
<svg class="r" style="left:341.3px;top:971.4px" width="23" height="22" viewBox="0 0 23 22"><defs><radialGradient id="lg2" cx="0.4" cy="0.35" r="0.7"><stop offset="0" stop-color="#ffffff"/><stop offset="1" stop-color="#dcdcdc"/></radialGradient><linearGradient id="rg2" x1="0" y1="0" x2="1" y2="1"><stop offset="0" stop-color="#b8c4d0"/><stop offset="1" stop-color="#5a5a5a"/></linearGradient></defs><circle cx="8" cy="8" r="6.9" fill="url(#lg2)" stroke="url(#rg2)" stroke-width="1.7"/><path d="M13.2 13.2 L20.3 19.8" stroke="#2e2e2e" stroke-width="4.2" stroke-linecap="round"/><path d="M14.6 14.3 L19.2 18.6" stroke="#7a7a7a" stroke-width="1"/></svg>
<div class="r" style="left:715px;top:964px;width:12px;height:28px;box-sizing:border-box;background:#ebf1fc;border-right:2px solid #c0d4f6;"></div>
<div class="r" style="left:923px;top:964px;width:8px;height:28px;box-sizing:border-box;background:#ebf1fc;border-right:2px solid #c0d4f6;"></div>
<div class="r" style="left:1077px;top:964px;width:16px;height:28px;box-sizing:border-box;background:#ebf1fc;border-right:2px solid #c0d4f6;"></div>
<div class="t" style="right:1000px;top:965.68px;font-size:24px;line-height:24px;color:#000;font-weight:normal;text-align:right;">23.000 ms</div>
<div class="t" style="right:846px;top:965.68px;font-size:24px;line-height:24px;color:#000;font-weight:normal;text-align:right;">23.000 ms</div>
<div class="t" style="right:538px;top:965.68px;font-size:24px;line-height:24px;color:#000;font-weight:normal;text-align:right;">23.000 ms</div>
<div class="t" style="left:1386px;top:965.68px;font-size:24px;line-height:24px;color:#000;font-weight:normal;">1</div>
<div class="t" style="left:19px;top:1011.68px;font-size:24px;line-height:24px;text-decoration:underline;text-underline-offset:2px;text-decoration-thickness:2px;" id="nm3">DocsOverviewLayout.reast</div>
<svg class="r" style="left:353.4px;top:1013.4px" width="23" height="22" viewBox="0 0 23 22"><defs><radialGradient id="lg3" cx="0.4" cy="0.35" r="0.7"><stop offset="0" stop-color="#ffffff"/><stop offset="1" stop-color="#dcdcdc"/></radialGradient><linearGradient id="rg3" x1="0" y1="0" x2="1" y2="1"><stop offset="0" stop-color="#b8c4d0"/><stop offset="1" stop-color="#5a5a5a"/></linearGradient></defs><circle cx="8" cy="8" r="6.9" fill="url(#lg3)" stroke="url(#rg3)" stroke-width="1.7"/><path d="M13.2 13.2 L20.3 19.8" stroke="#2e2e2e" stroke-width="4.2" stroke-linecap="round"/><path d="M14.6 14.3 L19.2 18.6" stroke="#7a7a7a" stroke-width="1"/></svg>
<div class="r" style="left:715px;top:1006px;width:16px;height:28px;box-sizing:border-box;background:#ebf1fc;border-right:2px solid #c0d4f6;"></div>
<div class="r" style="left:923px;top:1006px;width:12px;height:28px;box-sizing:border-box;background:#ebf1fc;border-right:2px solid #c0d4f6;"></div>
<div class="r" style="left:1077px;top:1006px;width:24px;height:28px;box-sizing:border-box;background:#ebf1fc;border-right:2px solid #c0d4f6;"></div>
<div class="t" style="right:1000px;top:1007.68px;font-size:24px;line-height:24px;color:#000;font-weight:normal;text-align:right;">34.000 ms</div>
<div class="t" style="right:846px;top:1007.68px;font-size:24px;line-height:24px;color:#000;font-weight:normal;text-align:right;">34.000 ms</div>
<div class="t" style="right:538px;top:1007.68px;font-size:24px;line-height:24px;color:#000;font-weight:normal;text-align:right;">34.000 ms</div>
<div class="t" style="left:1386px;top:1007.68px;font-size:24px;line-height:24px;color:#000;font-weight:normal;">1</div>
<div class="t" style="left:19px;top:1053.68px;font-size:24px;line-height:24px;text-decoration:underline;text-underline-offset:2px;text-decoration-thickness:2px;" id="nm4">DocsOverviewLayout.d</div>
<svg class="r" style="left:313.4px;top:1055.4px" width="23" height="22" viewBox="0 0 23 22"><defs><radialGradient id="lg4" cx="0.4" cy="0.35" r="0.7"><stop offset="0" stop-color="#ffffff"/><stop offset="1" stop-color="#dcdcdc"/></radialGradient><linearGradient id="rg4" x1="0" y1="0" x2="1" y2="1"><stop offset="0" stop-color="#b8c4d0"/><stop offset="1" stop-color="#5a5a5a"/></linearGradient></defs><circle cx="8" cy="8" r="6.9" fill="url(#lg4)" stroke="url(#rg4)" stroke-width="1.7"/><path d="M13.2 13.2 L20.3 19.8" stroke="#2e2e2e" stroke-width="4.2" stroke-linecap="round"/><path d="M14.6 14.3 L19.2 18.6" stroke="#7a7a7a" stroke-width="1"/></svg>
<div class="r" style="left:715px;top:1048px;width:8px;height:28px;box-sizing:border-box;background:#ebf1fc;border-right:2px solid #c0d4f6;"></div>
<div class="r" style="left:923px;top:1048px;width:6px;height:28px;box-sizing:border-box;background:#ebf1fc;border-right:2px solid #c0d4f6;"></div>
<div class="r" style="left:1077px;top:1048px;width:10px;height:28px;box-sizing:border-box;background:#ebf1fc;border-right:2px solid #c0d4f6;"></div>
<div class="t" style="right:1000px;top:1049.68px;font-size:24px;line-height:24px;color:#000;font-weight:normal;text-align:right;">13.000 ms</div>
<div class="t" style="right:846px;top:1049.68px;font-size:24px;line-height:24px;color:#000;font-weight:normal;text-align:right;">13.000 ms</div>
<div class="t" style="right:538px;top:1049.68px;font-size:24px;line-height:24px;color:#000;font-weight:normal;text-align:right;">13.000 ms</div>
<div class="t" style="left:1386px;top:1049.68px;font-size:24px;line-height:24px;color:#000;font-weight:normal;">1</div>
<div class="t" style="left:19px;top:1095.68px;font-size:24px;line-height:24px;text-decoration:underline;text-underline-offset:2px;text-decoration-thickness:2px;" id="nm5">ApiIntro.d</div>
<svg class="r" style="left:169.3px;top:1097.4px" width="23" height="22" viewBox="0 0 23 22"><defs><radialGradient id="lg5" cx="0.4" cy="0.35" r="0.7"><stop offset="0" stop-color="#ffffff"/><stop offset="1" stop-color="#dcdcdc"/></radialGradient><linearGradient id="rg5" x1="0" y1="0" x2="1" y2="1"><stop offset="0" stop-color="#b8c4d0"/><stop offset="1" stop-color="#5a5a5a"/></linearGradient></defs><circle cx="8" cy="8" r="6.9" fill="url(#lg5)" stroke="url(#rg5)" stroke-width="1.7"/><path d="M13.2 13.2 L20.3 19.8" stroke="#2e2e2e" stroke-width="4.2" stroke-linecap="round"/><path d="M14.6 14.3 L19.2 18.6" stroke="#7a7a7a" stroke-width="1"/></svg>
<div class="r" style="left:715px;top:1090px;width:6px;height:28px;box-sizing:border-box;background:#ebf1fc;border-right:2px solid #c0d4f6;"></div>
<div class="r" style="left:923px;top:1090px;width:6px;height:28px;box-sizing:border-box;background:#ebf1fc;border-right:2px solid #c0d4f6;"></div>
<div class="r" style="left:1077px;top:1090px;width:10px;height:28px;box-sizing:border-box;background:#ebf1fc;border-right:2px solid #c0d4f6;"></div>
<div class="t" style="right:1000px;top:1091.68px;font-size:24px;line-height:24px;color:#000;font-weight:normal;text-align:right;">12.000 ms</div>
<div class="t" style="right:846px;top:1091.68px;font-size:24px;line-height:24px;color:#000;font-weight:normal;text-align:right;">12.000 ms</div>
<div class="t" style="right:538px;top:1091.68px;font-size:24px;line-height:24px;color:#000;font-weight:normal;text-align:right;">12.000 ms</div>
<div class="t" style="left:1386px;top:1091.68px;font-size:24px;line-height:24px;color:#000;font-weight:normal;">1</div>
<div class="r" style="left:0px;top:1130px;width:1577px;height:36px;background:#eee;"></div>
<div class="r" style="left:0px;top:1166px;width:1577px;height:2px;background:#aaa;"></div>
<div class="t" style="left:19px;top:1135.68px;font-size:24px;line-height:24px;color:#000;font-weight:bold;">Totals</div>
<div class="t" style="right:1000px;top:1135.68px;font-size:24px;line-height:24px;color:#000;font-weight:bold;text-align:right;">556.000 ms</div>
<div class="t" style="right:846px;top:1135.68px;font-size:24px;line-height:24px;color:#000;font-weight:bold;text-align:right;">556.000 ms</div>
<div class="t" style="right:538px;top:1135.68px;font-size:24px;line-height:24px;color:#000;font-weight:bold;text-align:right;">92.667 ms</div>
<div class="t" style="left:1386px;top:1135.68px;font-size:24px;line-height:24px;color:#000;font-weight:bold;">6</div>
<div class="r" style="left:0px;top:1208px;width:1577px;height:2px;background:#aaa;"></div>
<div class="r" style="left:0px;top:1210px;width:1577px;height:72px;background:#eee;"></div>
<div class="r" style="left:0px;top:1282px;width:1577px;height:2px;background:#aaa;"></div>
<div class="t" style="left:19px;top:1215.68px;font-size:24px;line-height:24px;color:#000;font-weight:bold;">Selection start</div>
<div class="t" style="left:19px;top:1251.68px;font-size:24px;line-height:24px;color:#000;font-weight:bold;">Selection extent</div>
<div class="t" style="right:338.5px;top:1215.68px;font-size:24px;line-height:24px;color:#000;font-weight:bold;text-align:right;">6.000 ms</div>
<div class="t" style="right:338.5px;top:1251.68px;font-size:24px;line-height:24px;color:#000;font-weight:bold;text-align:right;">557.000 ms</div>
</body></html>
